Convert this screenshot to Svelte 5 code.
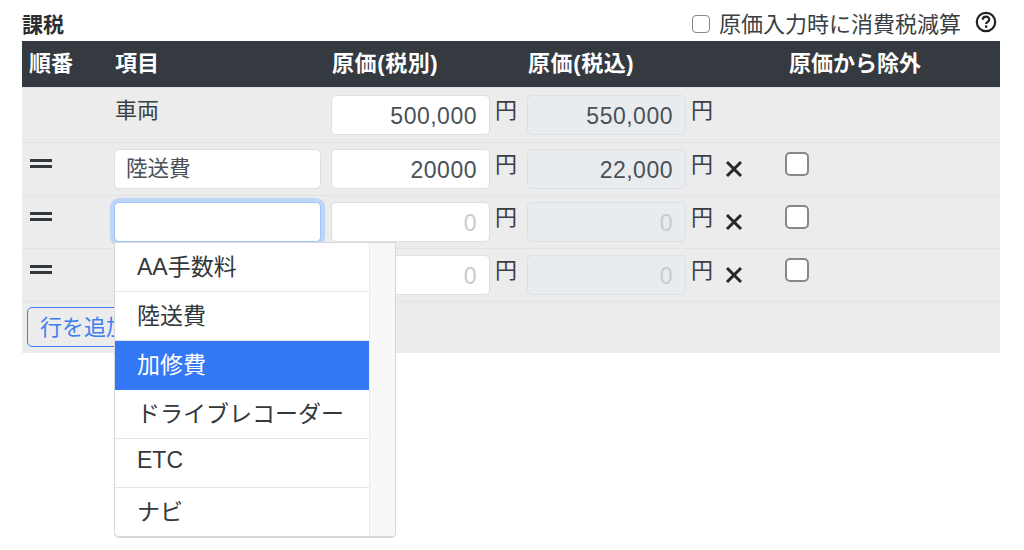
<script>
  const rows = [
    { name: '陸送費', price: '20000', tax: '22,000' },
    { name: '', price: '', tax: '', focused: true },
    { name: '', price: '', tax: '' },
  ];
  const options = ['AA手数料', '陸送費', '加修費', 'ドライブレコーダー', 'ETC', 'ナビ'];
</script>

<div class="page">
  <div class="title-row">
    <span class="title">課税</span>
    <label class="reduce">
      <input type="checkbox" class="check small" />
      <span>原価入力時に消費税減算</span>
    </label>
    <svg class="help" viewBox="0 0 22 22" width="22" height="22" aria-hidden="true">
      <circle cx="11" cy="11" r="9.2" fill="none" stroke="#222" stroke-width="2.2" />
      <path d="M7.8 8.8c0-2 1.4-3.1 3.3-3.1s3.2 1.1 3.2 2.8c0 2.4-3.2 2.4-3.2 4.6" fill="none" stroke="#222" stroke-width="2.2" />
      <rect x="10" y="14.4" width="2.3" height="2.4" fill="#222" />
    </svg>
  </div>

  <div class="table">
    <div class="row head">
      <div class="cell first">順番</div>
      <div class="cell">項目</div>
      <div class="cell price-head">原価(税別)</div>
      <div class="cell price-head">原価(税込)</div>
      <div class="cell">原価から除外</div>
    </div>

    <div class="row body-row top">
      <div class="cell first"></div>
      <div class="cell name">車両</div>
      <div class="cell money">
        <input class="field num" value="500,000" />
        <span class="yen">円</span>
      </div>
      <div class="cell money">
        <input class="field num" value="550,000" disabled />
        <span class="yen">円</span>
      </div>
      <div class="cell"></div>
    </div>

    {#each rows as row}
      <div class="row body-row">
        <div class="cell first">
          <span class="handle"></span>
        </div>
        <div class="cell">
          <input class="field item" class:focused={row.focused} value={row.name} />
        </div>
        <div class="cell money">
          <input class="field num" value={row.price} placeholder="0" />
          <span class="yen">円</span>
        </div>
        <div class="cell money">
          <input class="field num" value={row.tax} placeholder="0" disabled />
          <span class="yen">円</span>
          <svg class="remove" viewBox="0 0 18 18" width="18" height="18" aria-hidden="true">
            <path d="M2 2l14 14M16 2L2 16" stroke="#26292c" stroke-width="3" />
          </svg>
        </div>
        <div class="cell">
          <input type="checkbox" class="check" />
        </div>
      </div>
    {/each}

    <div class="foot">
      <button class="add">行を追加</button>
    </div>

    <div class="dropdown">
      <ul>
        {#each options as option, i}
          <li class:active={i === 2}>{option}</li>
        {/each}
      </ul>
      <div class="scrollbar"></div>
    </div>
  </div>
</div>

<style>
  :global(body) {
    margin: 0;
    background: #fff;
  }
  .page {
    width: 978px;
    min-height: 550px;
    margin-left: 22px;
    font-family: "Liberation Sans", "Noto Sans CJK JP", sans-serif;
    font-size: 22px;
    color: #3a3f44;
  }
  .title-row {
    display: flex;
    align-items: center;
    height: 41px;
    padding-top: 3px;
    box-sizing: border-box;
  }
  .title {
    font-size: 21px;
    font-weight: 700;
    color: #2b2f33;
    margin-right: auto;
    margin-top: 1px;
  }
  .reduce {
    display: flex;
    align-items: center;
    gap: 9px;
    margin-right: 14px;
  }
  .reduce .check {
    margin-top: 3px;
  }
  .help {
    margin-right: 3px;
  }
  .table {
    position: relative;
    background: #ececed;
  }
  .row {
    display: grid;
    grid-template-columns: 92px 217px 196px 258px 1fr;
    align-items: start;
  }
  .head {
    height: 46px;
    align-items: center;
    background: #343a3f;
    color: #fff;
    font-weight: 700;
    padding-bottom: 7px;
    box-sizing: border-box;
  }
  .head .first {
    padding-left: 7px;
  }
  .head .cell:nth-child(n + 2) {
    padding-left: 1px;
  }
  .head .cell:last-child {
    padding-left: 4px;
  }
  .head .price-head {
    letter-spacing: 0.6px;
  }
  .body-row {
    height: 53px;
    padding-top: 6px;
    border-bottom: 1px solid #e2e3e4;
    box-sizing: border-box;
  }
  .body-row.top {
    height: 56px;
    padding-top: 7px;
    border-top: 1px solid #dee0e2;
  }
  .name {
    padding-left: 1px;
    line-height: 32px;
  }
  .first {
    padding-left: 8px;
  }
  .money {
    display: flex;
    align-items: flex-start;
  }
  .field {
    box-sizing: border-box;
    height: 40px;
    border: 1px solid #dcdfe3;
    border-radius: 5px;
    background: #fff;
    font: inherit;
    color: #495057;
    padding: 0 12px;
    margin: 0;
    outline: none;
  }
  .field.item {
    width: 207px;
    font-size: 21.5px;
    padding-left: 11px;
    padding-bottom: 5px;
  }
  .field.num {
    width: 159px;
    text-align: right;
    font-size: 23px;
    letter-spacing: 0.5px;
    padding-top: 2px;
  }
  .field.num::placeholder {
    color: #c9cbcd;
    opacity: 1;
  }
  .field:disabled {
    background: #e9ecef;
    opacity: 1;
  }
  .field.focused {
    border-color: #9ec5fe;
    box-shadow: 0 0 0 4px #bfd5f5;
  }
  .yen {
    margin-left: 5px;
    line-height: 31px;
  }
  .remove {
    margin: 11px 0 0 12px;
  }
  .handle {
    display: block;
    box-sizing: border-box;
    width: 22px;
    height: 9px;
    margin-top: 10px;
    border-top: 3px solid #33383c;
    border-bottom: 3px solid #33383c;
  }
  .check {
    appearance: none;
    box-sizing: border-box;
    display: block;
    width: 24px;
    height: 24px;
    margin: 3px 0 0;
    background: #fff;
    border: 2px solid #85898d;
    border-radius: 5px;
  }
  .check.small {
    width: 18px;
    height: 18px;
    border-width: 1.5px;
    border-radius: 4px;
  }
  .foot {
    height: 51px;
    padding: 5px;
    box-sizing: border-box;
  }
  .add {
    height: 40px;
    padding: 0 12px 5px;
    background: transparent;
    border: 1px solid #3b7ff2;
    border-radius: 5px;
    color: #3b7ff2;
    font: inherit;
  }
  .dropdown {
    position: absolute;
    left: 92px;
    top: 201px;
    width: 282px;
    height: 296px;
    display: flex;
    box-sizing: border-box;
    background: #fff;
    border: 1px solid #d8d8d8;
    border-bottom-width: 2px;
    border-radius: 0 0 5px 5px;
    overflow: hidden;
  }
  ul {
    flex: 1;
    margin: 0;
    padding: 0;
    list-style: none;
    font-size: 23px;
    color: #33383c;
  }
  li {
    display: flex;
    align-items: center;
    height: 49px;
    padding: 0 0 5px 22px;
    box-sizing: border-box;
    border-bottom: 1px solid #e4e4e4;
  }
  li:last-child {
    border-bottom: 0;
  }
  li.active {
    background: #3578f6;
    color: #fff;
    border-bottom: 0;
  }
  .scrollbar {
    width: 25px;
    background: #f7f7f7;
    border-left: 1px solid #ececec;
  }
</style>
